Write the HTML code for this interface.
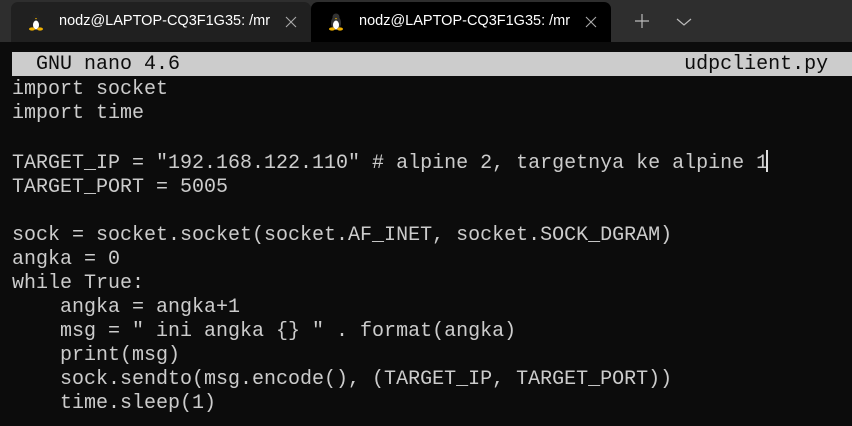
<!DOCTYPE html>
<html><head><style>
body{margin:0;width:852px;height:426px;overflow:hidden;background:#0c0c0c;position:relative;font-family:"Liberation Sans",sans-serif}
.bar{position:absolute;left:0;top:0;width:852px;height:42px;background:#2e2e2e}
.tab{position:absolute;top:2px;height:40px;border-radius:7px 7px 0 0}
.t1{left:11px;width:300px;background:#202020}
.t2{left:311px;width:300px;background:#000}
.tt{position:absolute;left:48px;top:11px;font-size:14.5px;color:#fff}
.ic{position:absolute;left:17px;top:11px}
.term{position:absolute;left:12px;top:52px;font-family:"Liberation Mono",monospace;font-size:20px;line-height:24px;color:#cccccc;white-space:pre}
.hdr{background:#cccccc;color:#0c0c0c;width:840px;height:24px;line-height:26px}
.cur{display:inline-block;width:2px;height:22px;background:#ddd;vertical-align:-4px;margin-left:-2px}
.line{line-height:24px;position:relative;top:2px}
</style></head><body>
<div class="bar"></div>
<div class="tab t1"><svg class="ic" width="16" height="18" viewBox="0 0 16 18"><ellipse cx="8" cy="10" rx="5" ry="7" fill="#222"/><ellipse cx="8" cy="12" rx="3" ry="4.5" fill="#fff"/><circle cx="8" cy="4" r="3.5" fill="#222"/><ellipse cx="4" cy="16" rx="3" ry="1.6" fill="#f0b000"/><ellipse cx="12" cy="16" rx="3" ry="1.6" fill="#f0b000"/><path d="M7 5h2l-1 1.5z" fill="#f0b000"/></svg><span class="tt">nodz@LAPTOP-CQ3F1G35: /mr</span><svg style="position:absolute;left:274px;top:14px" width="12" height="12"><path d="M1 1l10 10M11 1L1 11" stroke="#aaa" stroke-width="1.1"/></svg></div>
<div class="tab t2"><svg class="ic" width="16" height="18" viewBox="0 0 16 18"><ellipse cx="8" cy="10" rx="5" ry="7" fill="#333"/><ellipse cx="8" cy="12" rx="3" ry="4.5" fill="#fff"/><circle cx="8" cy="4" r="3.5" fill="#333"/><ellipse cx="4" cy="16" rx="3" ry="1.6" fill="#f0b000"/><ellipse cx="12" cy="16" rx="3" ry="1.6" fill="#f0b000"/><path d="M7 5h2l-1 1.5z" fill="#f0b000"/></svg><span class="tt">nodz@LAPTOP-CQ3F1G35: /mr</span><svg style="position:absolute;left:274px;top:14px" width="12" height="12"><path d="M1 1l10 10M11 1L1 11" stroke="#aaa" stroke-width="1.1"/></svg></div>
<svg style="position:absolute;left:634px;top:13px" width="16" height="16"><path d="M8 1v14M1 8h14" stroke="#bbb" stroke-width="1.2"/></svg>
<svg style="position:absolute;left:676px;top:17px" width="16" height="10"><path d="M1 2l7 6 7-6" stroke="#bbb" stroke-width="1.2" fill="none"/></svg>
<div class="term"><div class="hdr">  GNU nano 4.6                                          udpclient.py</div><div class="line">import socket
import time

TARGET_IP = "192.168.122.110" # alpine 2, targetnya ke alpine 1<span class="cur"></span>
TARGET_PORT = 5005

sock = socket.socket(socket.AF_INET, socket.SOCK_DGRAM)
angka = 0
while True:
    angka = angka+1
    msg = " ini angka {} " . format(angka)
    print(msg)
    sock.sendto(msg.encode(), (TARGET_IP, TARGET_PORT))
    time.sleep(1)</div></div>
</body></html>
